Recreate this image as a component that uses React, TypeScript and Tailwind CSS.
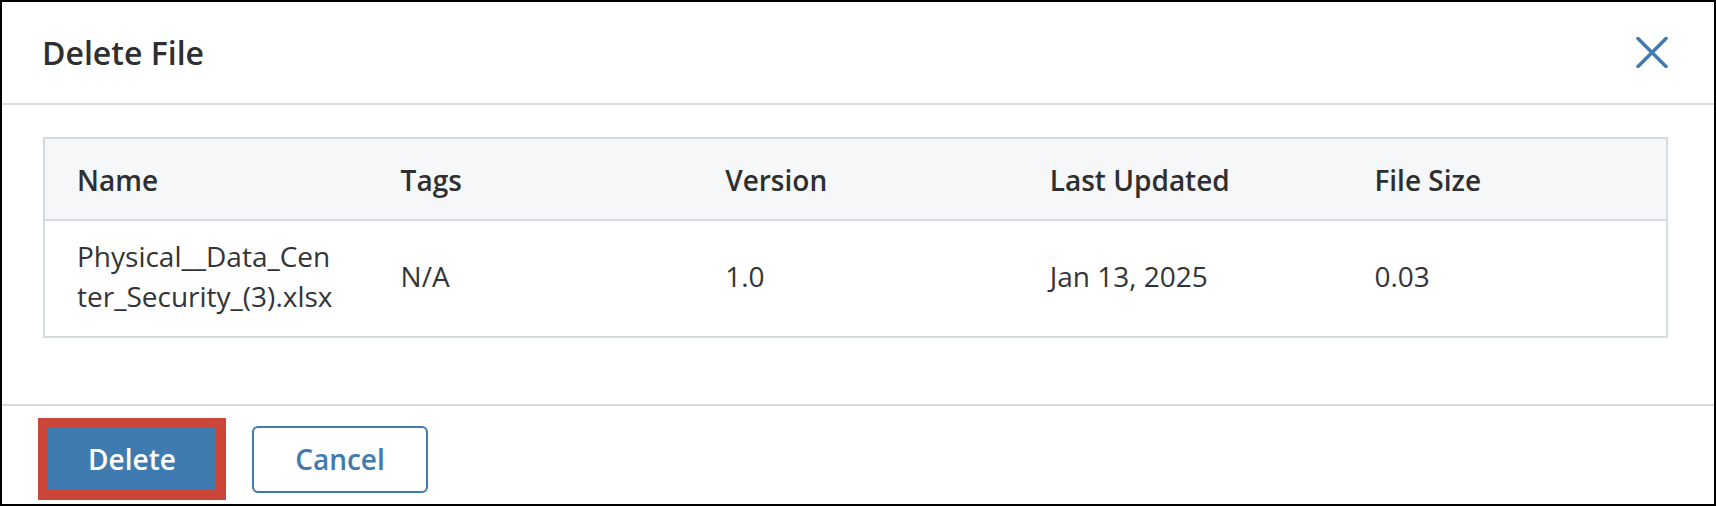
export default function App() {
    const columns = ["Name", "Tags", "Version", "Last Updated", "File Size"];

    return (
        <div className="w-[1716px] h-[506px] border-2 border-black bg-white flex flex-col overflow-hidden font-['Open_Sans',sans-serif] text-[#2e2f31]">
            {/* Header */}
            <div className="h-[103px] shrink-0 flex items-center justify-between pl-[40px] pr-[46px] border-b-2 border-[#d5dadd]">
                <h2 className="text-[32px] leading-[44px] font-semibold">Delete File</h2>
                <button className="w-[32px] h-[32px] flex items-center justify-center text-[#3f7bb1]">
                    <svg width="32" height="31" viewBox="0 0 32 31" fill="none" stroke="currentColor" strokeWidth="3.5" strokeLinecap="round">
                        <path d="M2 1.5 30 29.5" />
                        <path d="M30 1.5 2 29.5" />
                    </svg>
                </button>
            </div>

            {/* Body */}
            <div className="h-[299px] shrink-0 pt-[32px] pl-[41px] pr-[46px]">
                <table className="w-full table-fixed border-2 border-[#d5dbdf] text-[28px] leading-[40px]">
                    <thead>
                        <tr className="bg-[#f6f7f9] border-b-2 border-[#d5dbdf]">
                            {columns.map((c) => (
                                <th key={c} className="text-left font-semibold px-[32px] pt-[21px] pb-[19px]">{c}</th>
                            ))}
                        </tr>
                    </thead>
                    <tbody>
                        <tr className="text-[#333437]">
                            <td className="px-[32px] pt-[15px] pb-[20px] break-all align-middle">Physical__Data_Center_Security_(3).xlsx</td>
                            <td className="px-[32px] pt-[15px] pb-[20px] align-middle">N/A</td>
                            <td className="px-[32px] pt-[15px] pb-[20px] align-middle">1.0</td>
                            <td className="px-[32px] pt-[15px] pb-[20px] align-middle">Jan 13, 2025</td>
                            <td className="px-[32px] pt-[15px] pb-[20px] align-middle">0.03</td>
                        </tr>
                    </tbody>
                </table>
            </div>

            {/* Footer */}
            <div className="flex-1 border-t-2 border-[#d5dadd] pt-[12px] pl-[36px] flex items-start">
                <div className="flex items-center gap-[26px]">
                    <button className="w-[188px] h-[82px] border-[10px] border-[#cc4539] bg-[#3f7bb1] text-white text-[28px] leading-[40px] font-semibold">
                        Delete
                    </button>
                    <button className="w-[176px] h-[67px] border-2 border-[#3f7bb1] rounded-[6px] bg-white text-[#3f7bb1] text-[28px] leading-[40px] font-semibold">
                        Cancel
                    </button>
                </div>
            </div>
        </div>
    );
}
